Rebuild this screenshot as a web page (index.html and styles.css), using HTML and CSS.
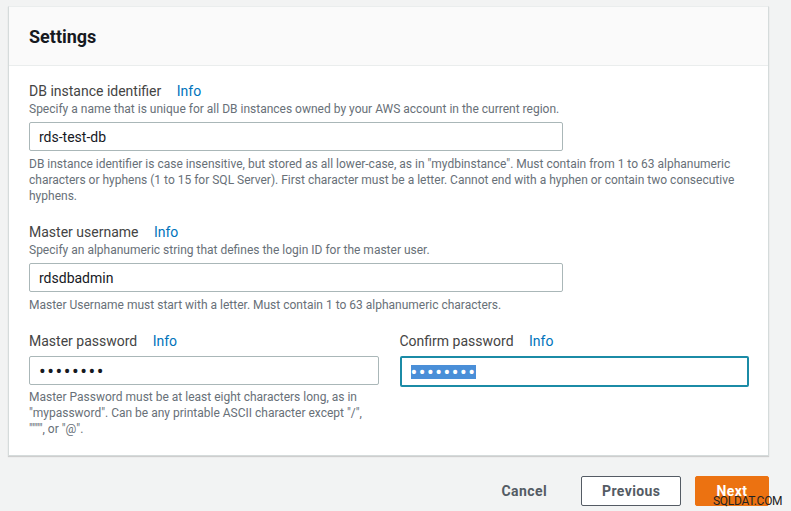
FILE: index.html
```html
<!DOCTYPE html>
<html lang="en">
  <head>
    <meta charset="UTF-8" />
    <meta name="viewport" content="width=device-width, initial-scale=1.0" />
    <title>Settings</title>
    <link rel="stylesheet" href="styles.css">
  </head>
  <body>
    <div class="page">
      <div class="card">
        <div class="card-header">
          <h2>Settings</h2>
        </div>
        <div class="card-body">
          <div class="group">
            <div class="label">DB instance identifier <a class="info">Info</a></div>
            <div class="desc">Specify a name that is unique for all DB instances owned by your AWS account in the current region.</div>
            <div class="input wide">rds-test-db</div>
            <div class="help">DB instance identifier is case insensitive, but stored as all lower-case, as in "mydbinstance". Must contain from 1 to 63 alphanumeric<br>characters or hyphens (1 to 15 for SQL Server). First character must be a letter. Cannot end with a hyphen or contain two consecutive<br>hyphens.</div>
          </div>

          <div class="group">
            <div class="label">Master username <a class="info">Info</a></div>
            <div class="desc">Specify an alphanumeric string that defines the login ID for the master user.</div>
            <div class="input wide">rdsdbadmin</div>
            <div class="help">Master Username must start with a letter. Must contain 1 to 63 alphanumeric characters.</div>
          </div>

          <div class="columns">
            <div class="group">
              <div class="label">Master password <a class="info">Info</a></div>
              <div class="input"><span class="dots">••••••••</span></div>
              <div class="help">Master Password must be at least eight characters long, as in<br>"mypassword". Can be any printable ASCII character except "/",<br>"""", or "@".</div>
            </div>
            <div class="group">
              <div class="label">Confirm password <a class="info">Info</a></div>
              <div class="input focused"><span class="dots selected">••••••••</span></div>
            </div>
          </div>
        </div>
      </div>

      <div class="actions">
        <button class="btn link">Cancel</button>
        <button class="btn normal">Previous</button>
        <button class="btn primary">Next</button>
      </div>
      <div class="watermark">SQLDAT.COM</div>
    </div>
  </body>
</html>
```

FILE: styles.css
```css
body {
  margin: 0;
  background-color: #f2f3f3;
  font-family: Roboto, "Liberation Sans", sans-serif;
  color: #16191f;
}
.page {
  position: relative;
  padding: 6px 22px 0 8px;
  height: 505px;
  overflow: hidden;
}
.card {
  background: white;
  border: 1px solid #d5dbdb;
  border-top-color: #eaeded;
  box-shadow: 0 1px 1px rgba(0, 0, 0, 0.15);
}
.card-header {
  background: #fafafa;
  border-bottom: 1px solid #eaeded;
  height: 58px;
  padding: 0 20px;
  display: flex;
  align-items: center;
}
.card-header h2 {
  margin: 0;
  font-size: 18px;
  font-weight: bold;
  color: #16191f;
}
.card-body {
  padding: 16px 19px 18px 20px;
}
.group {
  margin-bottom: 19px;
}
.label {
  font-size: 14px;
  line-height: 19px;
  color: #444;
}
.info {
  color: #0073bb;
  margin-left: 12px;
}
.desc {
  font-size: 12px;
  line-height: 16px;
  color: #687078;
}
.input {
  margin-top: 5px;
  height: 27px;
  border: 1px solid #aab7b8;
  border-radius: 2px;
  padding: 0 9px;
  display: flex;
  align-items: center;
  font-size: 14px;
  color: #16191f;
}
.input.wide {
  width: 514px;
}
.input.focused {
  border: 2px solid #1b8ba6;
  height: 27px;
  padding: 0 9px;
}
.dots {
  font-size: 20px;
  letter-spacing: 1.5px;
  line-height: 14px;
}
.dots.selected {
  background: #4a8fd8;
  color: white;
}
.help {
  margin-top: 5px;
  font-size: 12px;
  line-height: 16px;
  color: #687078;
}
.columns {
  display: grid;
  grid-template-columns: 1fr 1fr;
  gap: 21px;
}
.columns .group {
  margin-bottom: 0;
}
.columns .help {
  margin-top: 4px;
}
.actions {
  display: flex;
  justify-content: flex-end;
  align-items: center;
  gap: 14px;
  margin-top: 20px;
}
.btn {
  height: 30px;
  font-family: Roboto, "Liberation Sans", sans-serif;
  font-size: 14px;
  font-weight: bold;
  border-radius: 2px;
  padding: 0 20px;
  cursor: pointer;
  letter-spacing: 0.4px;
}
.btn.link {
  background: none;
  border: none;
  color: #545b64;
}
.btn.normal {
  background: white;
  border: 1px solid #545b64;
  color: #545b64;
  width: 100px;
}
.btn.primary {
  background: #ec7211;
  border: 1px solid #ec7211;
  color: white;
  width: 74px;
}
.watermark {
  position: absolute;
  left: 713px;
  top: 494px;
  font-size: 12px;
  color: #222;
  letter-spacing: -0.3px;
}
```
